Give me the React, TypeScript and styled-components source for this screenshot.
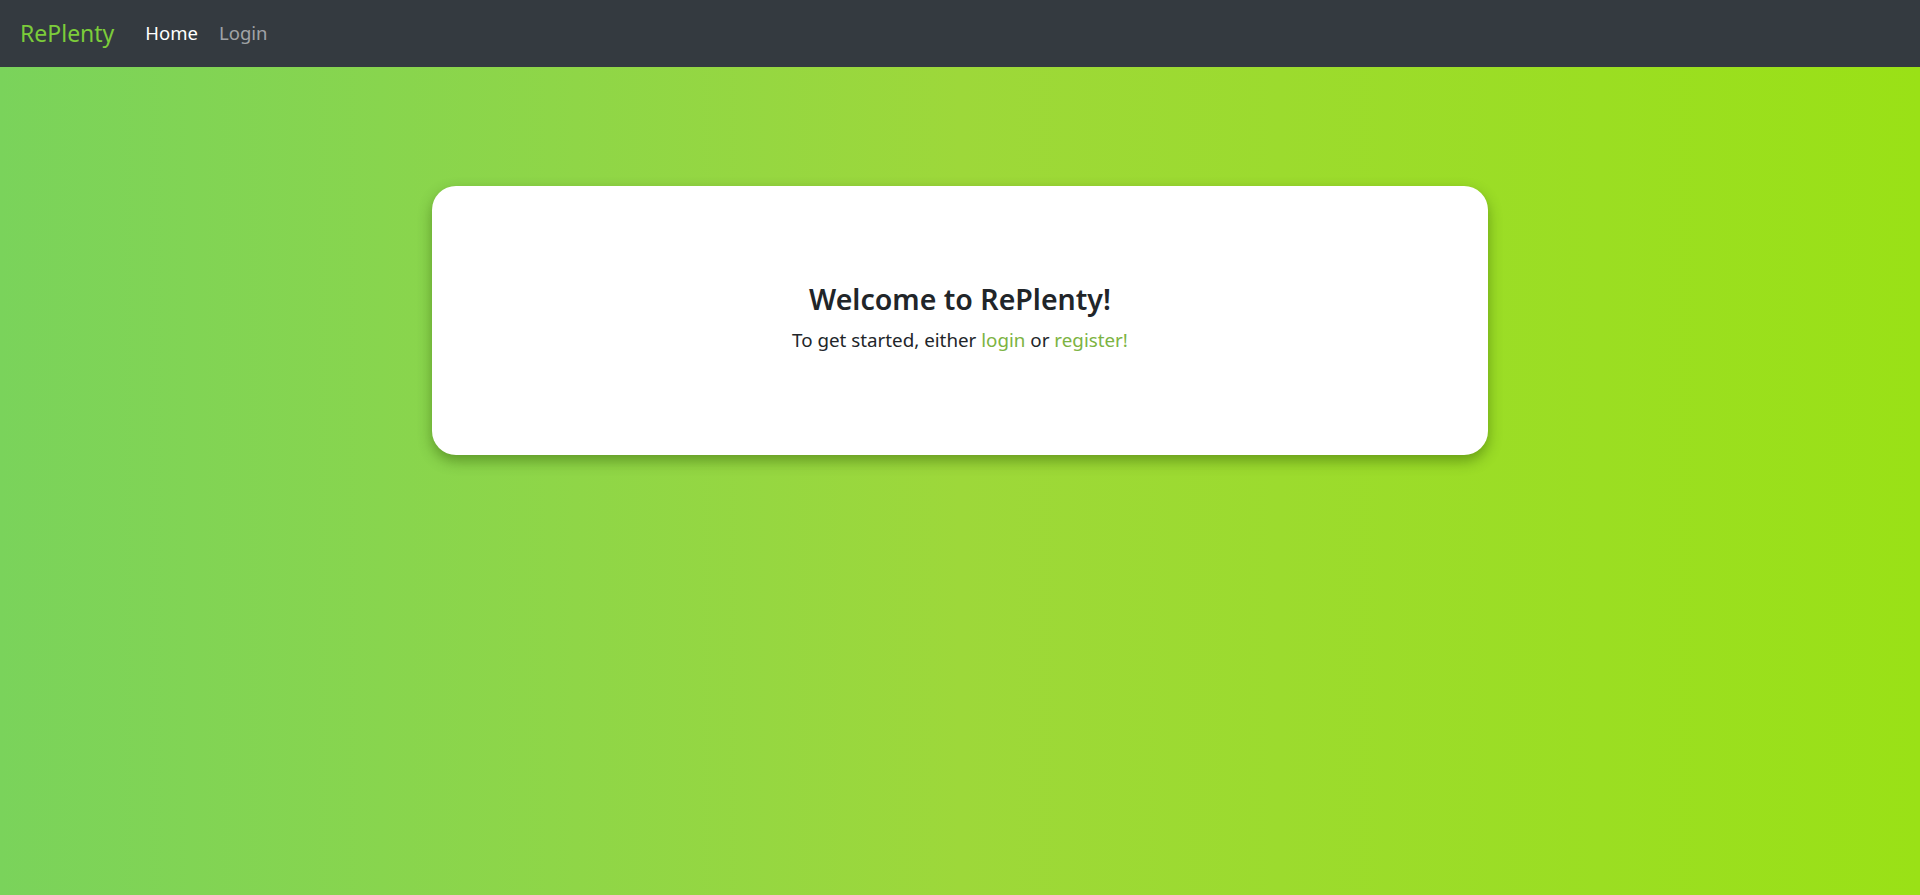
import React from "react";
import styled, { createGlobalStyle } from "styled-components";

const GlobalStyle = createGlobalStyle`
  html, body {
    margin: 0;
    padding: 0;
    height: 100%;
  }
  body {
    font-family: "Noto Sans", "Open Sans", sans-serif;
    color: #212529;
  }
  #root {
    min-height: 100vh;
    display: flex;
    flex-direction: column;
  }
`;

const Navbar = styled.nav`
  height: 67px;
  box-sizing: border-box;
  display: flex;
  align-items: center;
  padding: 0 20px;
  background: #343a40;
`;

const Brand = styled.a`
  font-size: 23px;
  color: #7ccc3a;
  text-decoration: none;
  margin-right: 31px;
  margin-top: -2px;
`;

const NavLink = styled.a<{ active?: boolean }>`
  font-size: 18.5px;
  color: ${(props) => (props.active ? "#ffffff" : "rgba(255, 255, 255, 0.55)")};
  text-decoration: none;
  margin-right: 21px;
  margin-top: -2px;
`;

const Main = styled.main`
  flex: 1;
  display: flex;
  justify-content: center;
  align-items: flex-start;
  padding-top: 119px;
  background: linear-gradient(90deg, #7ad35b 0%, #9dd83a 50%, #9ae116 100%);
`;

const Card = styled.section`
  width: 1056px;
  height: 269px;
  box-sizing: border-box;
  background: #ffffff;
  border-radius: 24px;
  box-shadow: 0 6px 14px rgba(40, 80, 0, 0.45);
  display: flex;
  flex-direction: column;
  align-items: center;
  justify-content: center;
  padding-bottom: 6px;
`;

const Title = styled.h3`
  margin: 0 0 10px;
  font-size: 28.5px;
  font-weight: 600;
  line-height: 1.2;
  color: #212529;
`;

const Lead = styled.p`
  margin: 0;
  font-size: 18.8px;
  color: #212529;
`;

const GreenLink = styled.a`
  color: #7cb342;
  text-decoration: none;
`;

export default function App() {
  return (
    <>
      <GlobalStyle />
      <Navbar>
        <Brand href="#">RePlenty</Brand>
        <NavLink href="#" active>
          Home
        </NavLink>
        <NavLink href="#">Login</NavLink>
      </Navbar>
      <Main>
        <Card>
          <Title>Welcome to RePlenty!</Title>
          <Lead>
            To get started, either <GreenLink href="#">login</GreenLink> or{" "}
            <GreenLink href="#">register!</GreenLink>
          </Lead>
        </Card>
      </Main>
    </>
  );
}
